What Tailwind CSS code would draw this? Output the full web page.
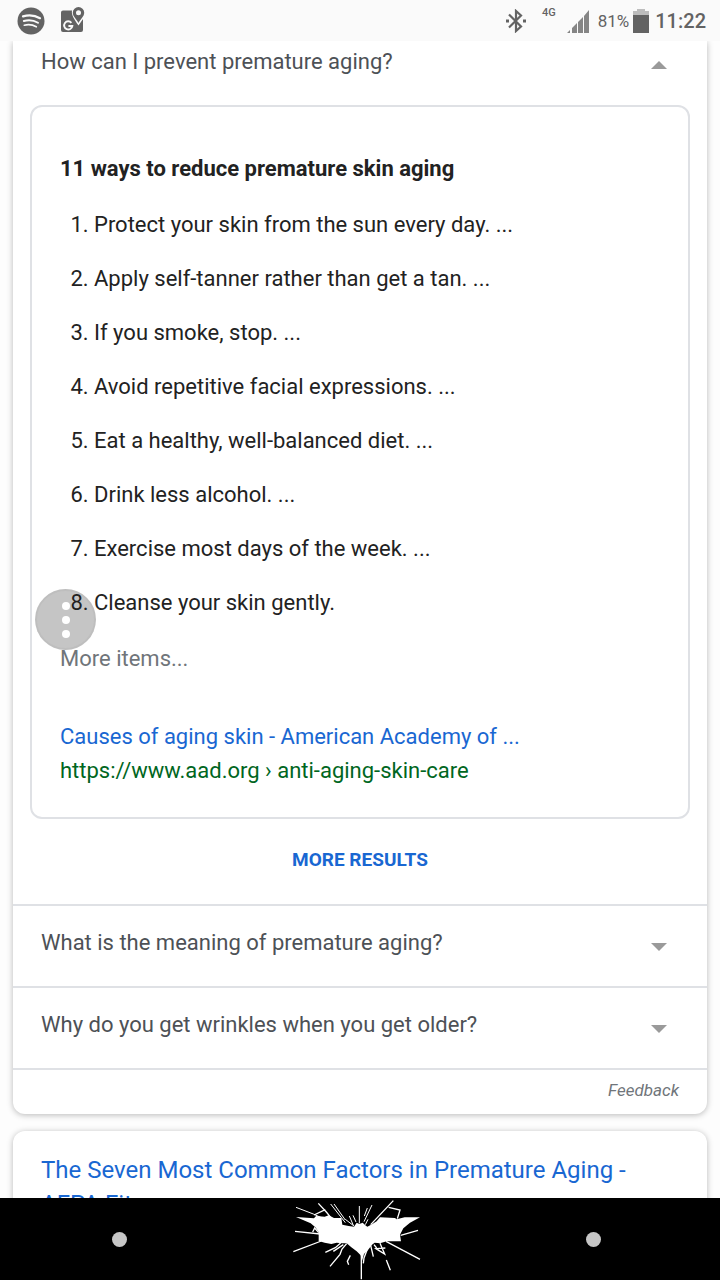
<!DOCTYPE html>
<html lang="en">
<head>
  <meta charset="UTF-8">
  <meta name="viewport" content="width=device-width, initial-scale=1.0">
  <title>premature aging - Search</title>
  <script src="https://cdn.jsdelivr.net/npm/@tailwindcss/browser@4"></script>
</head>
<body class="h-screen flex flex-col bg-[#fdfdfd] text-[22px] leading-[30px] text-[#222] font-[Roboto,sans-serif]">

  <!-- Status bar -->
  <header class="shrink-0 h-[41px] flex items-center justify-between pl-[17px] pr-3.5 bg-[#fafafa] text-[#636363]">
    <div class="flex items-center gap-4">
      <svg class="w-7 h-7" viewBox="0 0 28 28" fill="none" aria-label="Spotify">
        <circle cx="14" cy="14" r="13.5" fill="#636363"/>
        <g stroke="#fafafa" stroke-linecap="round">
          <path d="M6 9.400c5.500-1.500 12-1 17 1.800" stroke-width="2.200"/>
          <path d="M6.800 14c4.800-1.300 10-.7 14.200 1.700" stroke-width="1.900"/>
          <path d="M7.300 18.200c4-1 8.400-.5 12 1.600" stroke-width="1.600"/>
        </g>
      </svg>
      <svg class="w-6 h-7" viewBox="0 0 24 28" aria-label="Maps">
        <path fill="#636363" d="M2 3.500H11c-.8 4.500 2 8.500 6.500 15l4.500-6.500V23a2 2 0 0 1-2 2H2a2 2 0 0 1-2-2V5.500a2 2 0 0 1 2-2z"/>
        <path fill="#636363" fill-rule="evenodd" d="M17.500 0a5.700 5.700 0 0 1 5.700 5.700C23.200 9.500 19.500 12 17.500 16 15.500 12 11.800 9.500 11.800 5.700A5.700 5.700 0 0 1 17.500 0zm0 3.200a2.500 2.500 0 1 0 0 5 2.500 2.500 0 0 0 0-5z"/>
        <path fill="none" stroke="#fafafa" stroke-width="1.900" d="M10.400 15.800a4.100 4.100 0 1 0 .9 3.200H7.400"/>
      </svg>
    </div>
    <div class="flex items-center">
      <svg class="w-5 h-6" viewBox="0 0 20 24" fill="none" stroke="#636363" stroke-width="2.200" aria-label="Bluetooth">
        <path d="M3 5.500l12 12-5 4.500V2l5 4.500L3 18.500"/>
        <path d="M0 12h3M17 12h3" stroke-width="3"/>
      </svg>
      <span class="ml-4 mb-4 text-[11px] leading-4 font-medium">4G</span>
      <svg class="ml-2.5 w-6 h-6" viewBox="0 0 24 24" fill="#858585" aria-label="Signal">
        <path d="M1 24l3-3v3zM6 19l5-5v10H6zM12 13l5-5v16h-5zM18 7l5-6v23h-5z"/>
      </svg>
      <span class="ml-2 text-[17px]">81%</span>
      <svg class="ml-1 w-4 h-6" viewBox="0 0 16 24" aria-label="Battery">
        <path fill="#bdbdbd" d="M4 0h8v2h4v5H0V2h4z"/>
        <path fill="#636363" d="M0 6h16v18H0z"/>
      </svg>
      <span class="ml-1.5 text-[20px] font-medium">11:22</span>
    </div>
  </header>

  <main class="relative flex-1 min-h-0 overflow-hidden px-[13px]">

    <!-- People also ask -->
    <section class="bg-white rounded-b-xl shadow-[0_1px_6px_rgba(0,0,0,0.28)]">
      <button class="w-full h-16 pl-7 pr-10 pb-[22px] flex items-center justify-between text-left text-[#4d5156]">
        How can I prevent premature aging?
        <svg class="mt-1.5 w-4 h-2" viewBox="0 0 16 8" fill="#9a9a9a"><path d="M8 0l8 8H0z"/></svg>
      </button>

      <div class="mx-[17px] border-2 border-[#dfe1e5] rounded-xl pl-7 pr-6 pt-[47px] pb-[31px]">
        <h2 class="font-bold">11 ways to reduce premature skin aging</h2>
        <ol class="relative z-10 list-decimal mt-[26px] pl-[34px] flex flex-col gap-6">
          <li>Protect your skin from the sun every day. ...</li>
          <li>Apply self-tanner rather than get a tan. ...</li>
          <li>If you smoke, stop. ...</li>
          <li>Avoid repetitive facial expressions. ...</li>
          <li>Eat a healthy, well-balanced diet. ...</li>
          <li>Drink less alcohol. ...</li>
          <li>Exercise most days of the week. ...</li>
          <li>Cleanse your skin gently.</li>
        </ol>
        <p class="mt-[26px] text-[#70757a]">More items...</p>
        <a href="#" class="block mt-12 text-[#1967d2]">Causes of aging skin - American Academy of ...</a>
        <cite class="block mt-1 not-italic text-[#006621]">https://www.aad.org › anti-aging-skin-care</cite>
      </div>

      <div class="h-[85px] pb-1 flex items-center justify-center">
        <a href="#" class="text-[19px] font-bold text-[#1967d2]">MORE RESULTS</a>
      </div>

      <button class="w-full h-[82px] pl-7 pr-10 pb-1.5 border-t-2 border-[#dfe1e5] flex items-center justify-between text-left text-[#4d5156]">
        What is the meaning of premature aging?
        <svg class="mt-2 w-4 h-2" viewBox="0 0 16 8" fill="#9a9a9a"><path d="M0 0h16L8 8z"/></svg>
      </button>
      <button class="w-full h-[82px] pl-7 pr-10 pb-1.5 border-t-2 border-[#dfe1e5] flex items-center justify-between text-left text-[#4d5156]">
        Why do you get wrinkles when you get older?
        <svg class="mt-2 w-4 h-2" viewBox="0 0 16 8" fill="#9a9a9a"><path d="M0 0h16L8 8z"/></svg>
      </button>
      <div class="h-[46px] pr-7 pb-1 border-t-2 border-[#dfe1e5] flex items-center justify-end">
        <a href="#" class="text-[17px] leading-6 italic text-[#70757a]">Feedback</a>
      </div>
    </section>

    <!-- Next result -->
    <section class="mt-[17px] bg-white rounded-xl px-7 pt-[22px] pb-8 shadow-[0_1px_6px_rgba(0,0,0,0.28)]">
      <a href="#" class="block text-[24px] leading-[34px] text-[#1967d2]">The Seven Most Common Factors in Premature Aging -<br>AFPA Fitness</a>
    </section>

    <!-- Floating menu handle -->
    <button aria-label="Menu" class="absolute left-[35px] top-[548px] w-[61px] h-[61px] rounded-full bg-[#8c8c8c]/50 border-2 border-[#8c8c8c]/10 flex flex-col items-center justify-center gap-1.5">
      <span class="w-2 h-2 rounded-full bg-white"></span>
      <span class="w-2 h-2 rounded-full bg-white"></span>
      <span class="w-2 h-2 rounded-full bg-white"></span>
    </button>
  </main>

  <!-- Navigation bar -->
  <nav class="shrink-0 h-[82px] pl-28 pr-[119px] bg-black flex items-center justify-between">
    <button aria-label="Back" class="w-[15px] h-[15px] rounded-full bg-[#c6c6c6]"></button>
    <button aria-label="Home">
      <svg class="w-[134px] h-[82px]" viewBox="30 24 402 246">
        <path fill="#fff" d="M48 81L102 85 108 78 134 80 146 76 162 84 184 84 187 104 206 108 222 110 230 98 238 102 248 98 256 106 262 110 276 103 290 94 300 82 345 84 350 88 374 82 420 82 390 98 370 115 360 134 363 154 320 154 300 160 284 158 276 164 264 180 252 192 246 214 242 196 230 184 214 172 200 160 186 160 170 158 154 162 134 158 116 153 116 126 106 112 92 100z"/>
        <g stroke="#fff" fill="none">
          <path stroke-width="4" d="M115 40l24 26 16 20M102 75l34-16"/>
          <path stroke-width="4" d="M272 104l68-72M326 52l34 8-8 26M244 190v78"/>
          <path stroke-width="3" d="M48 52l52 20 26 12M152 42l44 56M162 42l34 48M196 88l26 20M208 78l12 28M219 76l9 20M238 48v52M276 45l-24 50M262 54l-9 24M264 88l-8 16"/>
          <path stroke-width="4" d="M45 124l76 8M40 185l84-32M362 136l52-15M318 154l102 54M150 229l30-36 6-16 14-16M136 187l30-14 16-14M98 126l6-12 12 14"/>
          <path stroke-width="4" d="M160 184l30-20M206 224l-4-10 9-18M300 160l14 32-26-16 28-2M272 166l8 34M262 178l-10 26-2 16M282 164l8 10M319 210l12 31"/>
        </g>
      </svg>
    </button>
    <button aria-label="Recent apps" class="w-[15px] h-[15px] rounded-full bg-[#c6c6c6]"></button>
  </nav>
</body>
</html>
